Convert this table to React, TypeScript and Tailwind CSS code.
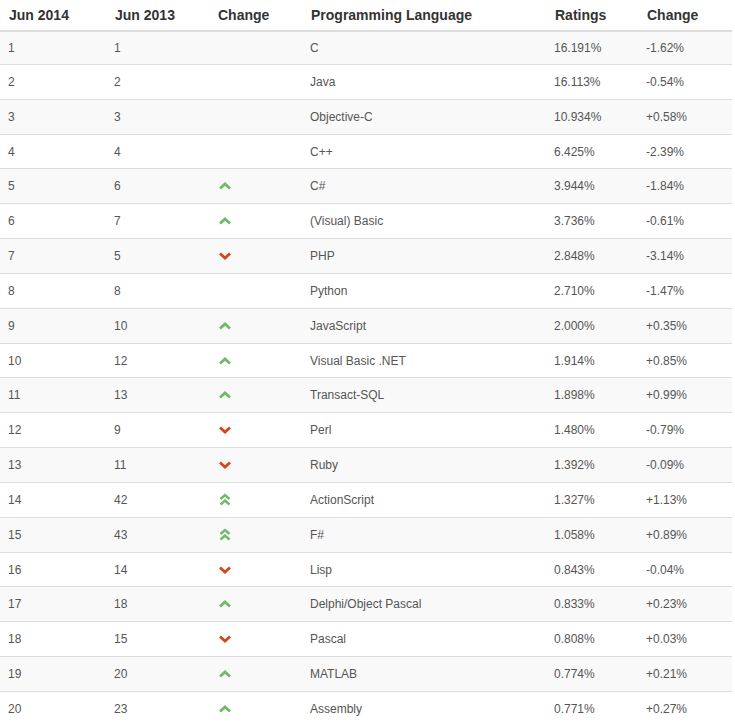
import React from "react";

type Trend = "up" | "down" | "up2" | "";
const rows: [string, string, Trend, string, string, string][] = [
  ["1", "1", "", "C", "16.191%", "-1.62%"],
  ["2", "2", "", "Java", "16.113%", "-0.54%"],
  ["3", "3", "", "Objective-C", "10.934%", "+0.58%"],
  ["4", "4", "", "C++", "6.425%", "-2.39%"],
  ["5", "6", "up", "C#", "3.944%", "-1.84%"],
  ["6", "7", "up", "(Visual) Basic", "3.736%", "-0.61%"],
  ["7", "5", "down", "PHP", "2.848%", "-3.14%"],
  ["8", "8", "", "Python", "2.710%", "-1.47%"],
  ["9", "10", "up", "JavaScript", "2.000%", "+0.35%"],
  ["10", "12", "up", "Visual Basic .NET", "1.914%", "+0.85%"],
  ["11", "13", "up", "Transact-SQL", "1.898%", "+0.99%"],
  ["12", "9", "down", "Perl", "1.480%", "-0.79%"],
  ["13", "11", "down", "Ruby", "1.392%", "-0.09%"],
  ["14", "42", "up2", "ActionScript", "1.327%", "+1.13%"],
  ["15", "43", "up2", "F#", "1.058%", "+0.89%"],
  ["16", "14", "down", "Lisp", "0.843%", "-0.04%"],
  ["17", "18", "up", "Delphi/Object Pascal", "0.833%", "+0.23%"],
  ["18", "15", "down", "Pascal", "0.808%", "+0.03%"],
  ["19", "20", "up", "MATLAB", "0.774%", "+0.21%"],
  ["20", "23", "up", "Assembly", "0.771%", "+0.27%"],
];

const GREEN = "#72b76c";
const RED = "#d4461b";

function Arrow({ t }: { t: Trend }) {
  if (t === "up")
    return (
      <svg width="14" height="8" viewBox="0 0 14 8" className="block">
        <polyline points="2,6.5 7,2 12,6.5" fill="none" stroke={GREEN} strokeWidth="2.8" strokeLinejoin="miter" />
      </svg>
    );
  if (t === "down")
    return (
      <svg width="14" height="8" viewBox="0 0 14 8" className="block">
        <polyline points="2,1.5 7,6 12,1.5" fill="none" stroke={RED} strokeWidth="2.8" strokeLinejoin="miter" />
      </svg>
    );
  if (t === "up2")
    return (
      <svg width="14" height="14" viewBox="0 0 14 14" className="block">
        <polyline points="2.5,6 7,2 11.5,6" fill="none" stroke={GREEN} strokeWidth="2.4" />
        <polyline points="2.5,11.5 7,7.5 11.5,11.5" fill="none" stroke={GREEN} strokeWidth="2.4" />
      </svg>
    );
  return null;
}

const grid = "grid grid-cols-[106px_103px_93px_244px_92px_94px]";

export default function App() {
  return (
    <div className="w-[732px] bg-white" style={{ fontFamily: '"Liberation Sans", Arial, sans-serif' }}>
      <div className={`${grid} h-[32px] border-b-2 border-[#dddddd] text-[14px] font-bold text-[#333333] items-center`}>
        {["Jun 2014", "Jun 2013", "Change", "Programming Language", "Ratings", "Change"].map((h, i) => (
          <div key={i} className="pl-[9px]">{h}</div>
        ))}
      </div>
      {rows.map((r, i) => (
        <div
          key={i}
          className={`${grid} items-center text-[12px] text-[#555555] ${i === 0 ? "h-[32px]" : "h-[34.83px] border-t border-[#dddddd]"} ${i % 2 === 0 ? "bg-[#f9f9f9]" : "bg-white"}`}
        >
          <div className="pl-[8px]">{r[0]}</div>
          <div className="pl-[8px]">{r[1]}</div>
          <div className="pl-[9px]">
            <Arrow t={r[2]} />
          </div>
          <div className="pl-[8px]">{r[3]}</div>
          <div className="pl-[8px]">{r[4]}</div>
          <div className="pl-[8px]">{r[5]}</div>
        </div>
      ))}
    </div>
  );
}
